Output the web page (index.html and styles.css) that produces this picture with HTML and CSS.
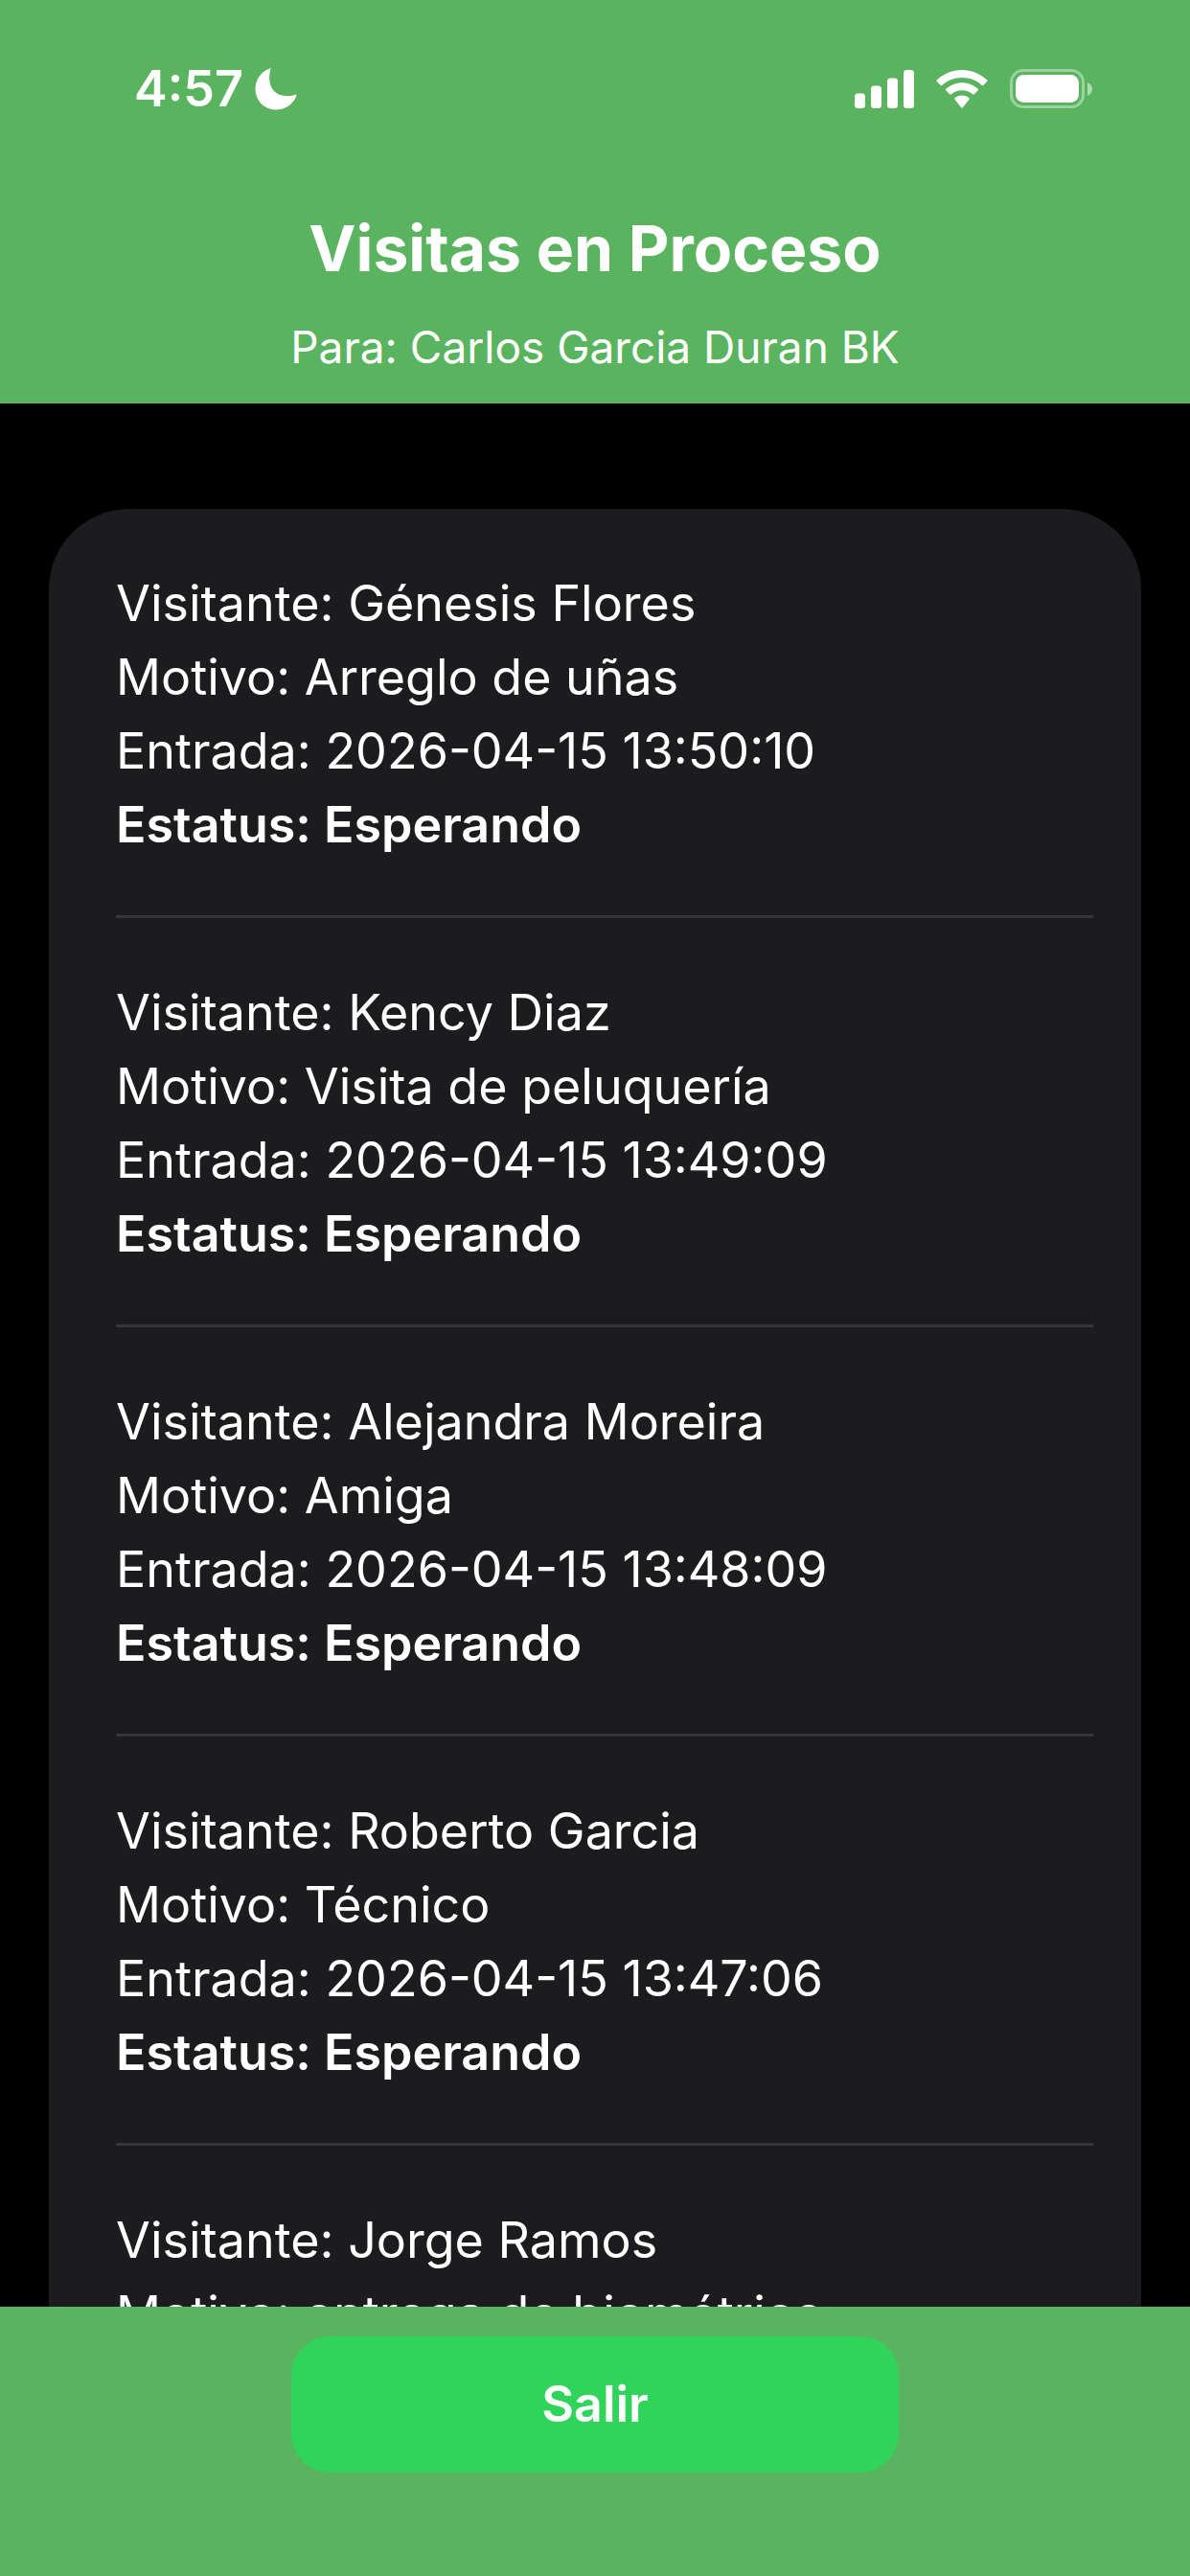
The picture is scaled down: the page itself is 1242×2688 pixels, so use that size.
FILE: index.html
```html
<!DOCTYPE html>
<html lang="es">
<head>
    <meta charset="UTF-8">
    <meta name="viewport" content="width=device-width, initial-scale=1.0">
    <title>Visitas en Proceso</title>
    <link rel="stylesheet" href="styles.css">
</head>
<body>
    <header>
        <div class="statusBar">
            <div class="statusTime">
                <span>4:57</span>
                <svg width="44" height="44" viewBox="0 0 44 44" fill="#fff">
                    <path d="M16.5 1 C17 .3 16.300 0 15.500 .4 C6 4 .5 12 .5 22 C.5 34 10 43.500 22 43.500 C31.500 43.500 40 38 43.400 29 C43.700 28 43 27.300 42 27.700 C39.500 28.700 36.500 29.200 33.500 29.200 C22.500 29.200 15.200 22 15.200 11 C15.200 7.500 15.600 4 16.500 1 Z"/>
                </svg>
            </div>
            <div class="statusIcons">
                <!-- Signal -->
                <svg width="62" height="40" viewBox="0 0 62 40" fill="#fff">
                    <rect x="0" y="24.500" width="11" height="15.500" rx="3.500"/>
                    <rect x="17" y="16.500" width="11" height="23.500" rx="3.500"/>
                    <rect x="34" y="8.500" width="11" height="31.500" rx="3.500"/>
                    <rect x="51" y="0" width="11" height="40" rx="3.500"/>
                </svg>
                <!-- Wifi -->
                <svg width="54" height="40" viewBox="0 0 54 40" fill="#fff">
                    <path d="M27 0 C37 0 46 3.800 53 10.200 Q54 11.200 53 12.200 L49.500 15.800 Q48.500 16.700 47.500 15.800 C42 10.800 35 8 27 8 C19 8 12 10.800 6.500 15.800 Q5.500 16.700 4.500 15.800 L1 12.200 Q0 11.200 1 10.200 C8 3.800 17 0 27 0 Z"/>
                    <path d="M27 13.300 C33.300 13.300 39 15.600 43.500 19.600 Q44.500 20.600 43.500 21.600 L39.800 25.200 Q38.900 26 37.900 25.200 C35 22.700 31.200 21.300 27 21.300 C22.800 21.300 19 22.700 16.100 25.200 Q15.100 26 14.200 25.200 L10.500 21.600 Q9.500 20.600 10.500 19.600 C15 15.600 20.700 13.300 27 13.300 Z"/>
                    <path d="M27 26.600 C30 26.600 32.300 27.500 34.300 29.100 Q35.300 30 34.300 31.100 L28 38.900 Q27 39.900 26 38.900 L19.700 31.100 Q18.700 30 19.700 29.100 C21.700 27.500 24 26.600 27 26.600 Z"/>
                </svg>
                <!-- Battery -->
                <svg width="86" height="42" viewBox="0 0 86 42">
                    <rect x="1.500" y="1.500" width="75" height="38" rx="12.500" fill="none" stroke="#fff" stroke-opacity="0.4" stroke-width="3"/>
                    <rect x="6" y="6" width="66" height="29" rx="8.500" fill="#fff"/>
                    <path d="M81 14 Q86 16.500 86 21 Q86 25.500 81 28 Z" fill="#fff" fill-opacity="0.5"/>
                </svg>
            </div>
        </div>
        <h1>Visitas en Proceso</h1>
        <p class="subtitle">Para: Carlos Garcia Duran BK</p>
    </header>

    <main>
        <ul class="visitList">
            <li class="visit">
                <p>Visitante: Génesis Flores</p>
                <p>Motivo: Arreglo de uñas</p>
                <p>Entrada: 2026-04-15 13:50:10</p>
                <p class="status">Estatus: Esperando</p>
            </li>
            <li class="visit">
                <p>Visitante: Kency Diaz</p>
                <p>Motivo: Visita de peluquería</p>
                <p>Entrada: 2026-04-15 13:49:09</p>
                <p class="status">Estatus: Esperando</p>
            </li>
            <li class="visit">
                <p>Visitante: Alejandra Moreira</p>
                <p>Motivo: Amiga</p>
                <p>Entrada: 2026-04-15 13:48:09</p>
                <p class="status">Estatus: Esperando</p>
            </li>
            <li class="visit">
                <p>Visitante: Roberto Garcia</p>
                <p>Motivo: Técnico</p>
                <p>Entrada: 2026-04-15 13:47:06</p>
                <p class="status">Estatus: Esperando</p>
            </li>
            <li class="visit">
                <p>Visitante: Jorge Ramos</p>
                <p>Motivo: entrega de biométrico</p>
            </li>
        </ul>
    </main>

    <footer>
        <button type="button">Salir</button>
    </footer>
</body>
</html>
```
FILE: styles.css
```css
* {
    box-sizing: border-box;
}
body {
    display: flex;
    flex-direction: column;
    height: 100vh;
    margin: 0;
    font-family: Inter, "Liberation Sans", sans-serif;
    font-size: 52px;
    line-height: 77px;
    background-color: #000;
    color: #fff;
}
h1,
p {
    margin: 0;
}
header {
    padding: 54px 0 20px;
    text-align: center;
    background-color: #5ab45f;
}
.statusBar {
    display: flex;
    justify-content: space-between;
    align-items: center;
    padding: 0 102px 0 140px;
    margin-bottom: 88px;
}
.statusTime {
    display: flex;
    align-items: center;
    gap: 12px;
    font-weight: 600;
}
.statusIcons {
    display: flex;
    align-items: center;
    gap: 23px;
}
svg {
    display: block;
}
h1 {
    font-size: 66px;
    font-weight: 700;
    line-height: 81px;
    margin-bottom: 24px;
}
.subtitle {
    font-size: 46px;
}
main {
    flex: 1;
    min-height: 0;
    padding: 110px 51px 0;
    overflow-y: auto;
    scrollbar-width: none; /* scrolls without showing a bar */
}
.visitList {
    margin: 0;
    padding: 0 50px 0 70px;
    list-style: none;
    background-color: #1c1c1e;
    border-radius: 84px;
}
.visit {
    padding: 60px 0 56px;
    border-bottom: 3px solid #363638;
}
.visit:last-child {
    border-bottom: none;
}
.status {
    font-weight: 600;
}
footer {
    display: flex;
    justify-content: center;
    padding: 31px 0 108px;
    background-color: #5ab45f;
}
button {
    width: 51%;
    padding: 32px;
    border: none;
    border-radius: 40px;
    font-family: inherit;
    font-size: 52px;
    font-weight: 600;
    line-height: 78px;
    color: #fff;
    background-color: #30d45a;
    cursor: pointer;
}
```
